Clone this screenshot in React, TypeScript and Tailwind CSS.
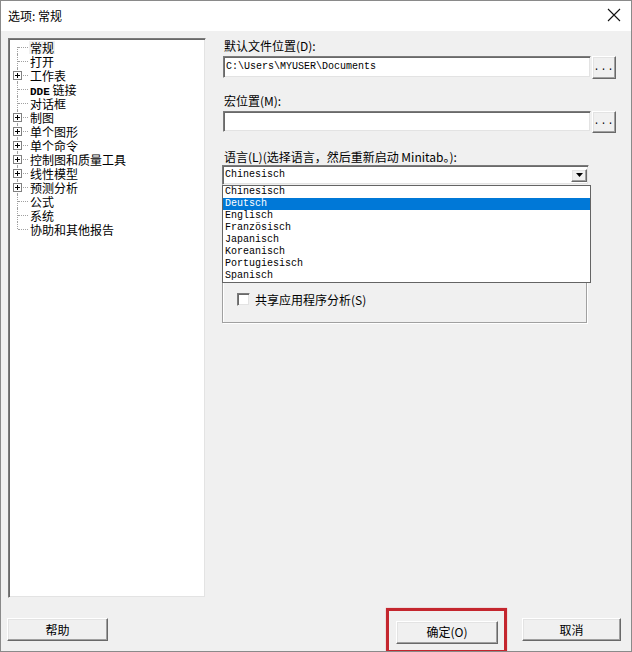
import React from 'react';

const cjk = { fontFamily: '"Noto Sans CJK SC", "Noto Sans", sans-serif' };
const mono = { fontFamily: '"Liberation Mono", "Noto Sans CJK SC", monospace' };

type TreeItem = { label: string; expandable?: boolean; selected?: boolean };

const treeItems: TreeItem[] = [
  { label: '常规', selected: true },
  { label: '打开' },
  { label: '工作表', expandable: true },
  { label: 'DDE 链接' },
  { label: '对话框' },
  { label: '制图', expandable: true },
  { label: '单个图形', expandable: true },
  { label: '单个命令', expandable: true },
  { label: '控制图和质量工具', expandable: true },
  { label: '线性模型', expandable: true },
  { label: '预测分析', expandable: true },
  { label: '公式' },
  { label: '系统' },
  { label: '协助和其他报告' },
];

const languages = [
  'Chinesisch',
  'Deutsch',
  'Englisch',
  'Französisch',
  'Japanisch',
  'Koreanisch',
  'Portugiesisch',
  'Spanisch',
];

// Raised win32 button edges
const raised =
  'border-t border-l border-t-white border-l-white border-b border-r border-b-[#696969] border-r-[#696969] shadow-[inset_-1px_-1px_0_#a0a0a0,inset_1px_1px_0_#e3e3e3]';

// Sunken edit box edges
const sunken =
  'border-t border-l border-t-[#7a7a7a] border-l-[#7a7a7a] border-b border-r border-b-[#f0f0f0] border-r-[#f0f0f0] shadow-[inset_1px_1px_0_#696969,inset_-1px_-1px_0_#e3e3e3]';

const TreeRow: React.FC<{ item: TreeItem; first: boolean; last: boolean }> = ({ item, first, last }) => (
  <div className="flex h-[14px] items-center">
    <div className="relative h-full w-[19px] shrink-0">
      <div
        className={`absolute left-[8px] w-0 border-l border-dotted border-[#a0a0a0] ${first ? 'top-[7px]' : 'top-0'} ${
          last ? 'h-[7px]' : 'bottom-0'
        }`}
      />
      <div className="absolute left-[9px] top-[7px] h-0 w-[10px] border-t border-dotted border-[#a0a0a0]" />
      {item.expandable && (
        <div className="absolute left-[4px] top-[3px] flex h-[9px] w-[9px] items-center justify-center border border-[#808080] bg-white">
          <div className="absolute h-px w-[5px] bg-black" />
          <div className="absolute h-[5px] w-px bg-black" />
        </div>
      )}
    </div>
    <div
      className={`ml-[1px] block h-[13px] overflow-visible px-[1px] text-[12px] leading-[13px] text-black ${
        item.selected ? 'bg-[#f0f0f0]' : ''
      }`}
      style={cjk}
    >
      {item.label.startsWith('DDE') ? (
        <>
          <span className="text-[11px] font-bold" style={mono}>DDE</span>
          <span style={cjk}> 链接</span>
        </>
      ) : (
        item.label
      )}
    </div>
  </div>
);

const Label: React.FC<{ text: string; className?: string }> = ({ text, className }) => (
  <div className={`h-[12px] text-[12px] leading-[12px] text-black ${className ?? ''}`} style={cjk}>
    {text}
  </div>
);

const App: React.FC = () => {
  return (
    <div className="relative h-[652px] w-[632px] overflow-hidden border border-[#8a8a8a] bg-[#f0f0f0]" style={cjk}>
      {/* Title bar */}
      <div className="flex h-[30px] items-center justify-between bg-white pl-[7px] pr-[10px]">
        <span className="text-[12px] text-black" style={cjk}>
          选项: 常规
        </span>
        <svg width="14" height="14" viewBox="0 0 14 14" className="mt-[-2px]">
          <path d="M1 1 L13 13 M13 1 L1 13" stroke="#111" strokeWidth="1.1" fill="none" />
        </svg>
      </div>

      <div className="flex items-start">
        {/* Tree panel */}
        <div className={`ml-[7px] mt-[7px] h-[560px] w-[198px] bg-white ${sunken}`}>
          <div className="pt-[1px]">
            {treeItems.map((item, i) => (
              <TreeRow key={item.label} item={item} first={i === 0} last={i === treeItems.length - 1} />
            ))}
          </div>
        </div>

        {/* Right column */}
        <div className="ml-[16px] mt-[9px] w-[394px]">
          <Label text="默认文件位置(D):" className="ml-[2px]" />
          <div className="mt-[4px] flex">
            <div className={`ml-[1px] flex h-[22px] w-[368px] items-center bg-white pl-[2px] ${sunken}`}>
              <span className="text-[10px] leading-[12px] text-black" style={mono}>
                C:\Users\MYUSER\Documents
              </span>
            </div>
            <button className={`ml-[1px] flex h-[23px] w-[24px] items-end justify-center bg-[#f0f0f0] pb-[6px] ${raised}`}>
              <span className="text-[10px] leading-[8px] tracking-[1px] text-black" style={mono}>
                ...
              </span>
            </button>
          </div>

          <Label text="宏位置(M):" className="ml-[2px] mt-[16px]" />
          <div className="mt-[4px] flex">
            <div className={`ml-[1px] h-[21px] w-[368px] bg-white ${sunken}`} />
            <button className={`ml-[1px] flex h-[22px] w-[24px] items-end justify-center bg-[#f0f0f0] pb-[6px] ${raised}`}>
              <span className="text-[10px] leading-[8px] tracking-[1px] text-black" style={mono}>
                ...
              </span>
            </button>
          </div>

          <Label text="语言(L)(选择语言，然后重新启动 Minitab。):" className="ml-[2px] mt-[18px]" />

          {/* Combo with open list */}
          <div className="relative mt-[2px] w-[367px]">
            <div className={`flex h-[20px] items-center justify-between bg-white pl-[2px] pr-[1px] ${sunken}`}>
              <span className="text-[10px] leading-[12px] text-black" style={mono}>
                Chinesisch
              </span>
              <div className={`flex h-[13px] w-[16px] items-center justify-center bg-[#f0f0f0] ${raised}`}>
                <svg width="7" height="4" viewBox="0 0 7 4">
                  <path d="M0 0 H7 L3.5 4 Z" fill="#000" />
                </svg>
              </div>
            </div>
            <div className="absolute left-0 top-[20px] z-10 w-[369px] border border-[#646464] bg-white">
              {languages.map((lang) => (
                <div
                  key={lang}
                  className={`h-[12px] pl-[2px] text-[10px] leading-[12px] ${
                    lang === 'Deutsch' ? 'bg-[#0078d7] text-white' : 'text-black'
                  }`}
                  style={mono}
                >
                  {lang}
                </div>
              ))}
            </div>
          </div>

          {/* Group box (mostly hidden behind the list) */}
          <div className="mt-[55px] h-[83px] w-[365px] border border-[#a0a0a0] shadow-[inset_1px_1px_0_#ffffff,1px_1px_0_#ffffff]">
            <div className="ml-[14px] mt-[52px] flex items-center">
              <div className={`h-[13px] w-[13px] bg-white ${sunken}`} />
              <span className="ml-[5px] text-[12px] leading-[12px] text-black" style={cjk}>
                共享应用程序分析(S)
              </span>
            </div>
          </div>
        </div>
      </div>

      {/* Bottom buttons */}
      <div className="mt-[20px] flex h-[23px] items-start">
        <button className={`ml-[6px] h-[23px] w-[101px] bg-[#f0f0f0] text-[12px] text-black ${raised}`} style={cjk}>
          帮助
        </button>
        <div className="relative ml-[288px]">
          <button className={`h-[23px] w-[102px] bg-[#f0f0f0] text-[12px] text-black ${raised}`} style={cjk}>
            确定(O)
          </button>
          <div className="pointer-events-none absolute -bottom-[9px] -left-[10px] -right-[9px] -top-[10px] border-[3px] border-[#c4262e] shadow-[0_0_1px_#e08088]" />
        </div>
        <button className={`ml-[24px] h-[23px] w-[99px] bg-[#f0f0f0] text-[12px] text-black ${raised}`} style={cjk}>
          取消
        </button>
      </div>
    </div>
  );
};

export default App;
